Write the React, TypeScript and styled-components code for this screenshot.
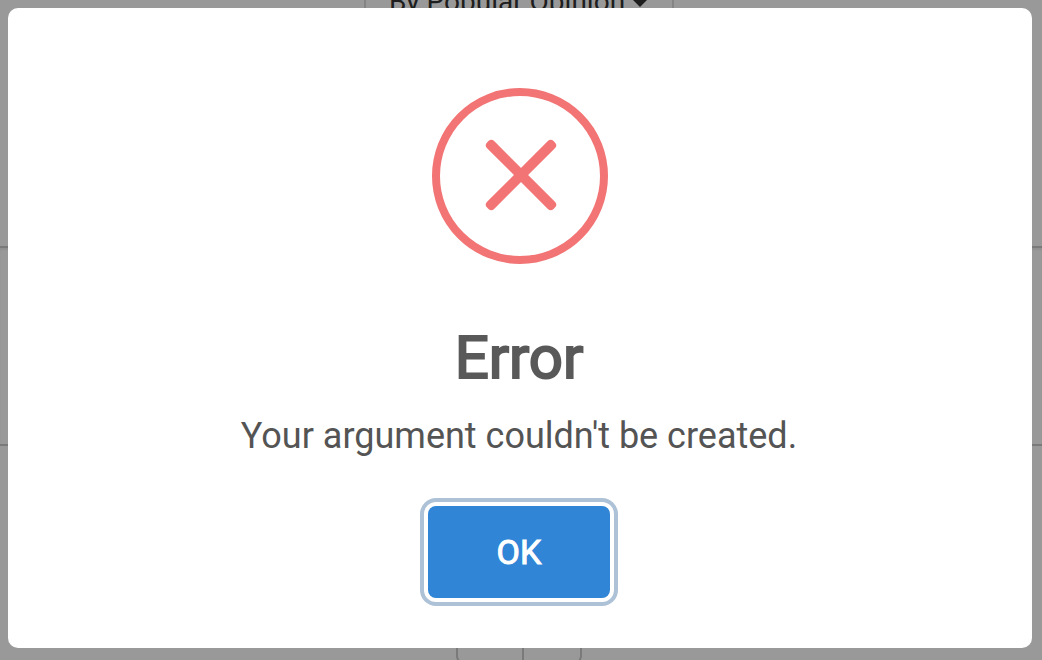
import React from "react";
import styled, { createGlobalStyle } from "styled-components";

const GlobalStyle = createGlobalStyle`
  *, *::before, *::after { box-sizing: border-box; }
  body {
    margin: 0;
    overflow: hidden;
    background: #fff;
    font-family: Roboto, "Liberation Sans", sans-serif;
  }
`;

const Page = styled.main`
  display: flex;
  flex-direction: column;
  margin-top: -44px;
  padding-right: 4px;
  height: calc(100vh + 44px);
  overflow: hidden;
`;

const Toolbar = styled.header`
  display: flex;
  flex: none;
  justify-content: center;
  align-items: flex-start;
  height: 290px;
`;

const SortButton = styled.button`
  display: flex;
  align-items: center;
  justify-content: center;
  gap: 6px;
  width: 310px;
  height: 92px;
  border: 2px solid #ddd;
  border-radius: 8px;
  background: transparent;
  color: #333;
  font: 400 28px/36px Roboto, sans-serif;
`;

const Caret = styled.span`
  border: 9px solid transparent;
  border-top-color: currentColor;
  border-bottom: 0;
`;

const ArgumentCard = styled.section`
  flex: none;
  height: 200px;
  margin-right: -4px;
  border: solid #ccc;
  border-width: 2px 0;
  box-shadow: inset 0 2px 2px rgba(0, 0, 0, 0.06);
`;

const VoteBar = styled.div`
  display: flex;
  flex: none;
  justify-content: center;
  padding-top: 140px;
`;

const VoteButton = styled.button<{ $side: "left" | "right" }>`
  width: ${(p) => (p.$side === "left" ? "68px" : "58px")};
  height: 78px;
  border: 2px solid #ccc;
  border-left-width: ${(p) => (p.$side === "left" ? "2px" : "0")};
  border-radius: ${(p) => (p.$side === "left" ? "8px 0 0 8px" : "0 8px 8px 0")};
  background: transparent;
`;

const Backdrop = styled.div`
  position: fixed;
  inset: 0;
  display: flex;
  align-items: center;
  padding: 8px 10px 12px 8px;
  background: rgba(0, 0, 0, 0.4);
`;

const Dialog = styled.div`
  display: flex;
  flex-direction: column;
  align-items: center;
  width: 100%;
  padding: 80px 40px 50px;
  border-radius: 10px;
  background: #fff;
  text-align: center;
`;

const ErrorIcon = styled.svg`
  display: block;
  width: 176px;
  height: 176px;
`;

const Content = styled.div`
  display: flex;
  flex-direction: column;
  align-items: center;
  padding: 54px 2px 0 0;
`;

const Title = styled.h2`
  margin: 0;
  color: #595959;
  font-size: 60px;
  line-height: 80px;
  font-weight: 400;
  -webkit-text-stroke: 2px #595959;
`;

const Message = styled.p`
  margin: 14px 0 0;
  color: #545454;
  font-size: 36px;
  line-height: 48px;
`;

const ConfirmButton = styled.button`
  width: 182px;
  height: 92px;
  margin-top: 46px;
  border: 0;
  border-radius: 8px;
  background: #3085d6;
  color: #fff;
  font: 400 34px/40px Roboto, sans-serif;
  -webkit-text-stroke: 1px #fff;
  box-shadow: 0 0 0 4px #fff, 0 0 0 8px #adc1d7;
  outline: 0;
`;

export default function App() {
  return (
    <>
      <GlobalStyle />
      <Page>
        <Toolbar>
          <SortButton type="button">
            By Popular Opinion
            <Caret />
          </SortButton>
        </Toolbar>
        <ArgumentCard />
        <VoteBar>
          <VoteButton type="button" $side="left" aria-label="Agree" />
          <VoteButton type="button" $side="right" aria-label="Disagree" />
        </VoteBar>
      </Page>
      <Backdrop>
        <Dialog role="alertdialog" aria-modal="true" aria-labelledby="title" aria-describedby="message">
          <ErrorIcon viewBox="0 0 176 176" aria-hidden="true">
            <circle cx="88" cy="88" r="84" fill="none" stroke="#f27474" strokeWidth="8" />
            <g fill="#f27474">
              <rect x="42" y="82" width="94" height="10" rx="4" transform="rotate(45 89 87)" />
              <rect x="42" y="82" width="94" height="10" rx="4" transform="rotate(-45 89 87)" />
            </g>
          </ErrorIcon>
          <Content>
            <Title id="title">Error</Title>
            <Message id="message">Your argument couldn't be created.</Message>
            <ConfirmButton type="button">OK</ConfirmButton>
          </Content>
        </Dialog>
      </Backdrop>
    </>
  );
}
